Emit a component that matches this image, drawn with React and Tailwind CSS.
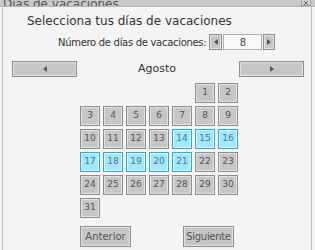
import React from "react";

const font = { fontFamily: '"DejaVu Sans", "Liberation Sans", sans-serif' };

function DayCell({ n, on }) {
  return (
    <div
      className={
        on
          ? "w-[20px] h-[20px] flex items-center justify-center border border-[#2aaadc] bg-[#a4e6fa] shadow-[inset_0_0_0_1px_#d4f4ff] text-[9px] text-[#3a7f9a]"
          : "w-[20px] h-[20px] flex items-center justify-center border border-[#8e8e8e] bg-[#c6c6c6] shadow-[inset_0_0_0_1px_#e2e2e2] text-[9px] text-[#555]"
      }
    >
      {n}
    </div>
  );
}

function Arrow({ dir }) {
  return (
    <svg width="4" height="6" viewBox="0 0 4 6">
      {dir === "left" ? <path d="M4 0 L0 3 L4 6 Z" fill="#555" /> : <path d="M0 0 L4 3 L0 6 Z" fill="#555" />}
    </svg>
  );
}

export default function App() {
  const selected = [14, 15, 16, 17, 18, 19, 20, 21];
  const cells = [];
  for (let i = 0; i < 5; i++) cells.push(null);
  for (let d = 1; d <= 31; d++) cells.push(d);

  return (
    <div className="w-[315px] h-[250px] bg-[#f4f4f4] overflow-hidden flex flex-col" style={font}>
      {/* title bar */}
      <div className="h-[7px] shrink-0 bg-[#c9c9c9] border-b border-[#b5b5b5] flex items-end overflow-hidden">
        <span className="ml-[3px] text-[12px] leading-[12px] mb-[-4px] text-[#555]">Días de vacaciones</span>
        <div className="ml-auto mr-[4px] w-[10px] h-[7px] border border-[#a0a0a0] bg-[#d2d2d2] flex items-center justify-center">
          <svg width="4" height="4" viewBox="0 0 4 4">
            <path d="M0 0 L4 4 M4 0 L0 4" stroke="#666" strokeWidth="1" />
          </svg>
        </div>
      </div>

      {/* body */}
      <div className="flex-1 ml-[2px] mr-[3px] border-l border-r border-[#b6c4d2] flex flex-col">
        <div className="pl-[24px] pt-[7px] h-[22px] text-[12px] leading-[14px] text-[#333]">
          Selecciona tus días de vacaciones
        </div>

        <div className="mt-[5px] flex items-center h-[16px]">
          <span className="ml-[55px] text-[10px] text-[#333] tracking-[-0.3px]">Número de días de vacaciones:</span>
          <div className="ml-[3px] flex items-center gap-[1px]">
            <div className="w-[13px] h-[16px] border border-[#8e8e8e] bg-[#c6c6c6] shadow-[inset_0_0_0_1px_#e2e2e2] flex items-center justify-center">
              <Arrow dir="left" />
            </div>
            <div className="w-[39px] h-[16px] border border-[#b0b0b0] bg-[#f8f8f8] flex items-center justify-center text-[10px] text-[#444]">
              8
            </div>
            <div className="w-[12px] h-[16px] border border-[#8e8e8e] bg-[#c6c6c6] shadow-[inset_0_0_0_1px_#e2e2e2] flex items-center justify-center">
              <Arrow dir="right" />
            </div>
          </div>
        </div>

        <div className="mt-[11px] flex items-center h-[16px]">
          <div className="ml-[9px] w-[65px] h-[16px] border border-[#8e8e8e] bg-[#c6c6c6] shadow-[inset_0_0_0_1px_#e2e2e2] flex items-center justify-center">
            <Arrow dir="left" />
          </div>
          <span className="flex-1 text-center text-[11px] text-[#333] pr-[2px]">Agosto</span>
          <div className="mr-[7px] w-[65px] h-[16px] border border-[#8e8e8e] bg-[#c6c6c6] shadow-[inset_0_0_0_1px_#e2e2e2] flex items-center justify-center">
            <Arrow dir="right" />
          </div>
        </div>

        <div className="mt-[6px] ml-[77px] grid grid-cols-[repeat(7,20px)] gap-[3px]">
          {cells.map((d, i) =>
            d === null ? <div key={i} className="w-[20px] h-[20px]" /> : <DayCell key={i} n={d} on={selected.includes(d)} />
          )}
        </div>

        <div className="mt-[8px] flex items-center">
          <div className="ml-[77px] w-[51px] h-[21px] border border-[#8e8e8e] bg-[#c6c6c6] shadow-[inset_0_0_0_1px_#e2e2e2] flex items-center justify-center text-[10px] text-[#555]">
            Anterior
          </div>
          <div className="ml-[52px] w-[51px] h-[21px] border border-[#8e8e8e] bg-[#c6c6c6] shadow-[inset_0_0_0_1px_#e2e2e2] flex items-center justify-center text-[10px] text-[#555] tracking-[-0.3px]">
            Siguiente
          </div>
        </div>
      </div>
    </div>
  );
}
